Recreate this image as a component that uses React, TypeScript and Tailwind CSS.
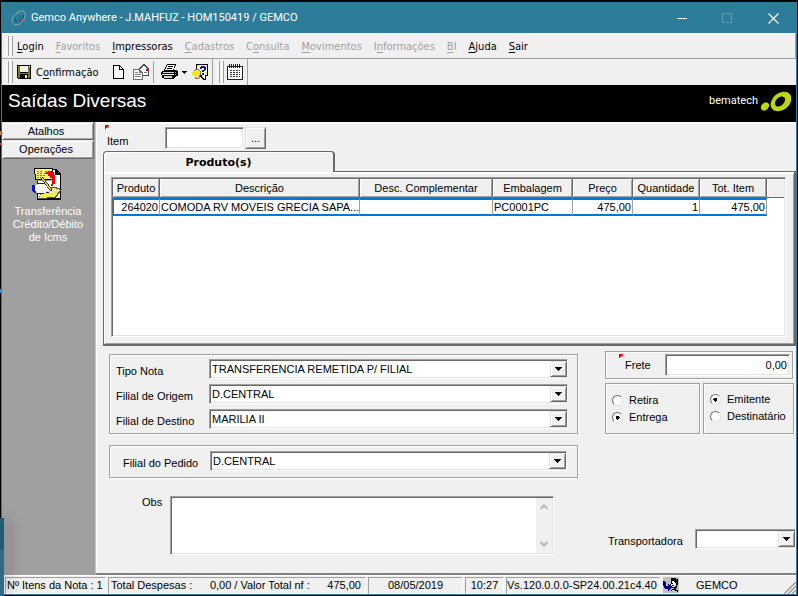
import { useState } from 'react';
import type { ReactNode } from 'react';

const sunken =
    'border border-t-[#a0a0a0] border-l-[#a0a0a0] border-r-white border-b-white shadow-[inset_1px_1px_0_#696969,inset_-1px_-1px_0_#e3e3e3]';
const raised =
    'border border-t-[#e3e3e3] border-l-[#e3e3e3] border-r-[#696969] border-b-[#696969] shadow-[inset_1px_1px_0_#fff,inset_-1px_-1px_0_#a0a0a0]';
const group = 'border border-[#a0a0a0] shadow-[inset_1px_1px_0_#fff,1px_1px_0_#fff]';
const statusPanel =
    'h-[17px] flex items-center whitespace-nowrap border border-t-[#a0a0a0] border-l-[#a0a0a0] border-r-white border-b-white';

const menus = [
    { before: '', key: 'L', after: 'ogin', enabled: true },
    { before: '', key: 'F', after: 'avoritos', enabled: false },
    { before: '', key: 'I', after: 'mpressoras', enabled: true },
    { before: '', key: 'C', after: 'adastros', enabled: false },
    { before: 'C', key: 'o', after: 'nsulta', enabled: false },
    { before: '', key: 'M', after: 'ovimentos', enabled: false },
    { before: 'I', key: 'n', after: 'formações', enabled: false },
    { before: '', key: 'B', after: 'I', enabled: false },
    { before: '', key: 'A', after: 'juda', enabled: true },
    { before: '', key: 'S', after: 'air', enabled: true },
];

const columns = ['Produto', 'Descrição', 'Desc. Complementar', 'Embalagem', 'Preço', 'Quantidade', 'Tot. Item'];

const Icon = ({ w, h, children }: { w: number; h: number; children: ReactNode }) => (
    <svg width={w} height={h} viewBox={`0 0 ${w} ${h}`} shapeRendering="crispEdges" className="shrink-0" aria-hidden="true">
        {children}
    </svg>
);

const AppIcon = () => (
    <svg width="16" height="16" viewBox="0 0 16 16" fill="none" className="shrink-0" aria-hidden="true">
        <path d="M6 2.500L10 .7L13.500 1.500L14.500 5L13 10L9 14L4 15L1 12.500L1.500 8L4 4.500L8 2.500" stroke="#b5aeb0" strokeDasharray="2 1" />
        <path d="M3 9.500h2M4 11.500h2M8 10.500h2" stroke="#5a1c78" />
        <path d="M10.500 6v3M12.500 5v3" stroke="#7b1c78" />
        <path d="M6 8.500h1M11 10.500h1" stroke="#c5354b" />
    </svg>
);

const SaveIcon = () => (
    <Icon w={14} h={14}>
        <path d="M0 0h14v14H1L0 13z" fill="#000" />
        <path d="M1 1h2v7h8V1h2v12h-2V9H3v4H1z" fill="#808000" />
        <path d="M3 1h8v6H3z" fill="#f0f0f0" />
        <path d="M8 10h2v3H8zM12 1h1v1h-1z" fill="#f0f0f0" />
    </Icon>
);

const PageIcon = () => (
    <Icon w={11} h={14}>
        <path d="M0 0h7v1h1v1h1v1h1v1h1v10H0z" fill="#000" />
        <path d="M1 1h5v4h4v8H1zM7 2h1v1h1v1H7z" fill="#fff" />
    </Icon>
);

const MailIcon = () => (
    <Icon w={16} h={16}>
        <path d="M5 5h1V4h1V3h1V2h1V1h1V0h2v1h1v1h1v1h1v1h1v8H5z" fill="#444" />
        <path d="M8 4h1V3h1V2h2v1h1v1h1v1H8zM6 5h9v6H6z" fill="#fff" />
        <path d="M13 5h2v2h-2z" fill="#e00020" />
        <path d="M11 8h3v1h-3z" fill="#777" />
        <path d="M0 5h7v1h1v1h1v1h1v8H0z" fill="#707070" />
        <path d="M1 6h5v3h3v6H1z" fill="#fff" />
        <path d="M2 8h3v1H2zM2 10h6v1H2zM2 12h6v1H2z" fill="#808080" />
    </Icon>
);

const PrinterIcon = () => (
    <Icon w={17} h={16}>
        <path d="M6 0h9v2h-1v2h-1v2h3v1h1v5h-2v1h-1v1h-1v1H3v-1H1v-3H0V8h1V7h2V5h1V3h1V1h1z" fill="#000" />
        <path d="M6 1h8v1h-1v3h-1v1H4V5h1V3h1z" fill="#fff" />
        <path d="M7 2h5v1H7zM6 4h5v1H6z" fill="#000" />
        <path d="M2 8h11v1H2zM3 12h8v2H3z" fill="#d6d6d6" />
        <path d="M1 10h12v1H1z" fill="#fff" />
        <path d="M8 12h3v1H8z" fill="#e6e600" />
        <path d="M14 8h1v1h-1zM14 10h1v1h-1z" fill="#999" />
    </Icon>
);

const HelpPrintIcon = () => (
    <Icon w={17} h={17}>
        <path d="M4 0h12v12h-2v4h-3v-1h-1v-1H9v-1H4z" fill="#000" />
        <path d="M5 1h10v10H5z" fill="#fff" />
        <path d="M12 11h1v4h-1v-1h-1v-1h-1v-2z" fill="#fff" />
        <path d="M5 1h2v2H5zM13 1h2v2h-2zM13 8h2v3h-2z" fill="#f0e070" />
        <path d="M1 7h2V6h4v1h1v4H7v3H4v-2H1v-1H0V8h1z" fill="#f4e526" />
        <path d="M2 6h1V5h4v1h1v1H7V6H3v1H2zM8 7h1v4H8zM7 11h1v3H7zM3 13h1v1h3v1H3z" fill="#777" />
        <path d="M8 3h1V2h4v1h1v3h-1v1h-1v1h-2V6h2V4h-2v1H8zM10 9h2v2h-2z" fill="#0f159a" />
    </Icon>
);

const NotesIcon = () => (
    <Icon w={16} h={16}>
        <path d="M0 2h16v14H0z" fill="#222" />
        <path d="M1 3h14v12H1z" fill="#fff" />
        <path d="M2 0h1v4H2zM4 0h1v4H4zM6 0h1v4H6zM8 0h1v4H8zM10 0h1v4h-1zM12 0h1v4h-1z" fill="#222" />
        <path d="M3 6.500h10M3 8.500h10M3 10.500h10M3 12.500h10" stroke="#333" strokeDasharray="2 1" />
    </Icon>
);

const TransferIcon = () => (
    <Icon w={32} h={32}>
        <path d="M19 1h5l5 5v26H5V13h14z" fill="#000" />
        <path d="M19 2h4v5h5v23H6V13h13z" fill="#fff" />
        <path d="M2 0h19v12H3z" fill="#000" />
        <path d="M3 1h17v10H4z" fill="#fff27a" />
        <path d="M5 3.500h6M13 3.500h5M5 5.500h5M12 5.500h6M5 7.500h9M5 9.500h7" stroke="#8d8900" strokeDasharray="2 1" />
        <path d="M16 3h4v1h2v3h1v9h-2v2h-2v-2h1v-6h-2V8h-2V6h-2V4h1z" fill="#f00000" />
        <path d="M11 20l12-1 7 2-6 9-18 1z" fill="#555" />
        <path d="M12 21l11-1 5 2-5 7-16 1z" fill="#f5e84a" />
        <path d="M13 24.500h9M11 27.500h11M19 22.500h7" stroke="#fff" strokeDasharray="2 1" />
        <path d="M-1 17h5v8H2l-3-3z" fill="#0018c8" />
        <path d="M3 17h2v-1h8l4 4v3h-3v2H4v-2H3z" fill="#fff" />
        <path d="M5 15.500h8M14 24.500h3M4 25.500h8" stroke="#222" />
        <path d="M8 9h3l9 12v2h-2l-8-11z" fill="#333" />
        <path d="M9 9h1l9 12-1 1-8-11z" fill="#ead72e" />
    </Icon>
);

const UserIcon = () => (
    <Icon w={16} h={16}>
        <path d="M0 0h16v16H0z" fill="#c0c0c0" />
        <path d="M8 1h5v1h2v6h-1v3h-1v2h2v2h-1v-1h-2v-1H9v1H8v-1h1v-1h2v-1H8V9H7V7h1z" fill="#000" />
        <path d="M9 4h2v1h1v1h1v3h-1v1H9V9H8V7h1z" fill="#f0f0f0" />
        <path d="M9 6h1v1H9zM9 8h2v1H9z" fill="#000" />
        <path d="M0 4h2v1h1v4h2V7h1v1h1v1h1v1h1v1H8v1H7v1H6v1H5v-2H2v-1H1V9H0z" fill="#00007c" />
    </Icon>
);

const Bematech = () => (
    <div className="flex items-center gap-[3px] text-white">
        <span className="font-[Roboto,sans-serif] text-[11px] leading-4">bematech</span>
        <svg width="30" height="22" viewBox="0 0 30 22" aria-hidden="true">
            <ellipse cx="4" cy="16.500" rx="4.500" ry="3.500" transform="rotate(-45 4 16.500)" fill="#bdd70f" />
            <ellipse cx="20" cy="11.500" rx="11.500" ry="8.500" transform="rotate(-40 20 11.500)" fill="#bdd70f" />
            <ellipse cx="19" cy="11.500" rx="6" ry="4" transform="rotate(-45 19 11.500)" fill="#000" />
        </svg>
    </div>
);

const Grip = () => (
    <span className="flex gap-px self-stretch py-[2px]">
        <span className="w-[3px] border-l border-l-white border-r border-r-[#a0a0a0]" />
        <span className="w-[3px] border-l border-l-white border-r border-r-[#a0a0a0]" />
    </span>
);

const Marker = () => (
    <svg width="4" height="4" viewBox="0 0 4 4" shapeRendering="crispEdges" className="absolute -top-1 -left-[3px]" aria-hidden="true">
        <path d="M0 0h4v1H3v1H2v1H1v1H0z" fill="#f00000" />
        <path d="M3 1h1v2H2V2h1z" fill="#c89090" />
    </svg>
);

const Combo = ({ id, value }: { id: string; value: string }) => (
    <div className={`relative min-w-0 flex-1 bg-white h-[20px] ${sunken}`}>
        <select id={id} className="block w-full h-full appearance-none bg-transparent pl-[2px] pr-5 leading-4 outline-none">
            <option>{value}</option>
        </select>
        <span className={`pointer-events-none absolute top-px right-0 bottom-px w-[17px] flex items-center justify-center bg-[#f0f0f0] ${raised}`}>
            <Icon w={7} h={4}>
                <path d="M0 0h7v1H6v1H5v1H4v1H3V3H2V2H1V1H0z" fill="#000" />
            </Icon>
        </span>
    </div>
);

const Radio = ({ name, label, checked, onChange }: { name: string; label: string; checked: boolean; onChange: () => void }) => (
    <label className="flex items-center gap-[6px] h-[17px]">
        <input
            type="radio"
            name={name}
            checked={checked}
            onChange={onChange}
            className="appearance-none w-[11px] h-[11px] rounded-full bg-white border border-t-[#696969] border-l-[#696969] border-r-[#e3e3e3] border-b-[#e3e3e3] checked:bg-[radial-gradient(circle,#000_2px,#fff_2px)]"
        />
        {label}
    </label>
);

const App = () => {
    const [entrega, setEntrega] = useState('Entrega');
    const [pagador, setPagador] = useState('Emitente');

    return (
        <div className="relative min-h-screen flex flex-col bg-black pt-[2px] pb-px px-px font-['Liberation_Sans',Arial,sans-serif] text-[11px] leading-[13px] text-black">
            <div className="flex-1 flex flex-col bg-[#f0f0f0] border border-[#2d7d9a]">
                {/* Title bar */}
                <div className="h-[30px] pl-[9px] flex items-center bg-[#2d7d9a] text-white">
                    <AppIcon />
                    <span className="ml-1 flex-1 font-[Roboto,sans-serif] text-[11px] leading-4">Gemco Anywhere - J.MAHFUZ - HOM150419 / GEMCO</span>
                    <button aria-label="Minimizar" className="w-[45px] h-full flex items-center justify-center">
                        <Icon w={10} h={1}><path d="M0 0h10v1H0z" fill="#fff" /></Icon>
                    </button>
                    <button aria-label="Maximizar" disabled className="w-[46px] h-full flex items-center justify-center">
                        <span className="w-[10px] h-[10px] border border-[#5b9bb3]" />
                    </button>
                    <button aria-label="Fechar" className="w-[46px] h-full flex items-center justify-center">
                        <svg width="11" height="11" viewBox="0 0 11 11" stroke="#fff" strokeWidth="1.200"><path d="M.5 .5l10 10M10.500 .5l-10 10" /></svg>
                    </button>
                </div>

                {/* Menu bar */}
                <nav className="h-[26px] pl-1 flex items-center gap-1 border-t border-t-white border-b border-b-[#a0a0a0] border-r border-r-[#a0a0a0] font-['DejaVu_Sans_Condensed','DejaVu_Sans',sans-serif]">
                    <Grip />
                    <div className="flex gap-[12px]">
                        {menus.map((m) => (
                            <button key={m.key + m.after} disabled={!m.enabled} className="disabled:text-[#a0a0a0]">
                                {m.before}<span className="underline underline-offset-2">{m.key}</span>{m.after}
                            </button>
                        ))}
                    </div>
                </nav>

                {/* Toolbar */}
                <div className="h-[26px] pl-1 flex items-center">
                    <Grip />
                    <button className="ml-1 flex items-center gap-[5px] font-['DejaVu_Sans_Condensed','DejaVu_Sans',sans-serif]">
                        <SaveIcon />
                        <span>C<span className="underline underline-offset-2">o</span>nfirmação</span>
                    </button>
                    <button aria-label="Novo" className="ml-[14px]"><PageIcon /></button>
                    <button aria-label="Enviar" className="ml-[9px]"><MailIcon /></button>
                    <span className="ml-[4px] w-px h-[22px] bg-[#a0a0a0]" />
                    <button aria-label="Imprimir" className="ml-[7px] flex items-center gap-1">
                        <PrinterIcon />
                        <Icon w={5} h={3}><path d="M0 0h5v1H4v1H3v1H2V2H1V1H0z" fill="#000" /></Icon>
                    </button>
                    <button aria-label="Ajuda de impressão" className="ml-[5px]"><HelpPrintIcon /></button>
                    <span className="ml-[3px] w-px h-full bg-[#a0a0a0]" />
                    <span className="ml-[4px] self-stretch flex"><Grip /></span>
                    <button aria-label="Agenda" className="ml-[3px]"><NotesIcon /></button>
                    <span className="ml-[4px] w-px h-full bg-[#a0a0a0]" />
                </div>

                <header className="h-[37px] pl-[6px] pr-[5px] pb-[5px] flex items-center justify-between bg-black">
                    <h1 className="text-[19px] leading-6 text-white">Saídas Diversas</h1>
                    <Bematech />
                </header>

                <div className="flex-1 flex">
                    {/* Side bar */}
                    <aside className="w-[93px] pr-px shrink-0 flex flex-col bg-[#a0a0a0]">
                        <button className={`h-[18px] pr-1 bg-[#f0f0f0] ${raised}`}>Atalhos</button>
                        <button className={`h-[19px] pr-1 bg-[#f0f0f0] ${raised}`}>Operações</button>
                        <button className="mt-[9px] flex flex-col items-center text-white">
                            <TransferIcon />
                            <span className="mt-[5px]">Transferência<br />Crédito/Débito<br />de Icms</span>
                        </button>
                    </aside>

                    <main className="flex-1 min-w-0 flex flex-col border-l border-l-[#c5d86d] border-b-2 border-b-[#808080]">
                        <div className="flex-1 flex flex-col border-t-2 border-l border-white">
                            {/* Item search */}
                            <div className="h-[27px] pl-[10px] pt-[3px] flex">
                                <label htmlFor="item" className="relative w-[58px] pt-2"><span className="absolute top-[2px] left-px"><Marker /></span>Item</label>
                                <input id="item" className={`w-[79px] h-[22px] bg-white px-1 outline-none ${sunken}`} />
                                <button aria-label="Procurar item" className={`ml-px w-[21px] h-[22px] bg-[#f0f0f0] ${raised}`}>...</button>
                            </div>

                            {/* Products tab */}
                            <div className="ml-[6px]">
                                <button className="relative z-10 block w-[232px] h-[21px] rounded-t-[4px] bg-[#f0f0f0] border-t border-l border-r-2 border-[#696969] shadow-[inset_1px_1px_0_#fff] font-['DejaVu_Sans',sans-serif] font-bold">
                                    Produto(s)
                                </button>
                                <div className="-mt-px border-t border-l border-r-2 border-b-2 border-[#696969] shadow-[inset_1px_2px_0_#fff,inset_-1px_-1px_0_#a0a0a0] pt-[5px] pl-[7px] pr-[8px] pb-[7px]">
                                    <div className={`h-[160px] bg-white p-px ${sunken}`}>
                                        <table className="w-full table-fixed border-separate border-spacing-0">
                                            <colgroup>
                                                <col className="w-[47px]" />
                                                <col className="w-[200px]" />
                                                <col className="w-[133px]" />
                                                <col className="w-[80px]" />
                                                <col className="w-[60px]" />
                                                <col className="w-[67px]" />
                                                <col className="w-[67px]" />
                                                <col />
                                            </colgroup>
                                            <thead>
                                                <tr className="h-[19px]">
                                                    {columns.map((c) => (
                                                        <th key={c} className="p-0 font-normal whitespace-nowrap bg-[#f0f0f0] border-r border-b border-[#696969] shadow-[inset_1px_1px_0_#fff,inset_-1px_-1px_0_#a0a0a0]">{c}</th>
                                                    ))}
                                                    <td className="bg-[#f0f0f0] border-b border-[#696969] shadow-[inset_1px_1px_0_#fff]" />
                                                </tr>
                                            </thead>
                                            <tbody>
                                                <tr className="h-[18px] [&>td]:border-y-2 [&>td]:border-y-[#0078d7] [&>td]:border-r [&>td]:border-r-[#a0a0a0] [&>td]:px-px [&>td]:py-0 [&>td]:whitespace-nowrap">
                                                    <td className="text-right border-l border-l-[#0078d7]">264020</td>
                                                    <td>COMODA RV MOVEIS GRECIA SAPA...</td>
                                                    <td />
                                                    <td>PC0001PC</td>
                                                    <td className="text-right">475,00</td>
                                                    <td className="text-right">1</td>
                                                    <td className="text-right">475,00</td>
                                                </tr>
                                            </tbody>
                                        </table>
                                    </div>
                                </div>
                            </div>

                            <div className="flex-1 flex">
                                {/* Branches and notes */}
                                <div className="flex-1 min-w-0 pl-[12px] pt-[8px]">
                                    <div className={`pl-[6px] pr-[9px] py-[4px] flex flex-col gap-[5px] ${group}`}>
                                        <div className="flex items-center">
                                            <label htmlFor="tipo" className="w-[93px] pt-1">Tipo Nota</label>
                                            <Combo id="tipo" value="TRANSFERENCIA REMETIDA P/ FILIAL" />
                                        </div>
                                        <div className="flex items-center">
                                            <label htmlFor="origem" className="w-[93px] pt-1">Filial de Origem</label>
                                            <Combo id="origem" value="D.CENTRAL" />
                                        </div>
                                        <div className="flex items-center">
                                            <label htmlFor="destino" className="w-[93px] pt-1">Filial de Destino</label>
                                            <Combo id="destino" value="MARILIA II" />
                                        </div>
                                    </div>
                                    <div className={`mt-[11px] pl-[13px] pr-[10px] pt-[5px] pb-[6px] flex items-center ${group}`}>
                                        <label htmlFor="pedido" className="w-[87px] pt-1">Filial do Pedido</label>
                                        <Combo id="pedido" value="D.CENTRAL" />
                                    </div>
                                    <div className="mt-[18px] pl-[33px] pr-[24px] flex">
                                        <label htmlFor="obs" className="w-[28px]">Obs</label>
                                        <div className={`flex-1 h-[59px] p-px flex bg-white ${sunken}`}>
                                            <textarea id="obs" className="flex-1 min-w-0 resize-none overflow-hidden px-1 outline-none" />
                                            <div className="w-[16px] py-[6px] flex flex-col items-center justify-between bg-[#f0f0f0]">
                                                <svg width="8" height="6" viewBox="0 0 8 6" fill="none" stroke="#b8b8b8" strokeWidth="2" aria-hidden="true"><path d="M.5 5L4 1.500L7.500 5" /></svg>
                                                <svg width="8" height="6" viewBox="0 0 8 6" fill="none" stroke="#b8b8b8" strokeWidth="2" aria-hidden="true"><path d="M.5 1L4 4.500L7.500 1" /></svg>
                                            </div>
                                        </div>
                                    </div>
                                </div>

                                {/* Freight */}
                                <div className="ml-[27px] w-[191px] flex flex-col pt-[5px] pb-[24px]">
                                    <div className={`mr-[3px] h-[28px] pl-[19px] pr-[2px] flex items-center ${group}`}>
                                        <label htmlFor="frete" className="relative w-[40px]"><span className="absolute -top-px -left-[3px]"><Marker /></span>Frete</label>
                                        <input id="frete" defaultValue="0,00" className={`flex-1 min-w-0 h-[22px] bg-white px-[2px] text-right outline-none ${sunken}`} />
                                    </div>
                                    <div className="mt-[4px] mr-[2px] h-[51px] flex gap-[3px]">
                                        <div className={`w-[95px] pl-[6px] pt-[8px] ${group}`}>
                                            <Radio name="entrega" label="Retira" checked={entrega === 'Retira'} onChange={() => setEntrega('Retira')} />
                                            <Radio name="entrega" label="Entrega" checked={entrega === 'Entrega'} onChange={() => setEntrega('Entrega')} />
                                        </div>
                                        <div className={`flex-1 pl-[6px] pt-[7px] whitespace-nowrap ${group}`}>
                                            <Radio name="pagador" label="Emitente" checked={pagador === 'Emitente'} onChange={() => setPagador('Emitente')} />
                                            <Radio name="pagador" label="Destinatário" checked={pagador === 'Destinatário'} onChange={() => setPagador('Destinatário')} />
                                        </div>
                                    </div>
                                    <div className="mt-auto pl-[3px] flex items-center">
                                        <label htmlFor="transportadora" className="w-[87px] pt-1">Transportadora</label>
                                        <Combo id="transportadora" value="" />
                                    </div>
                                </div>
                            </div>
                        </div>
                    </main>
                </div>

                {/* Status bar */}
                <footer className="h-[19px] pl-[3px] flex items-center gap-[2px] border-t border-t-white">
                    <span className={`w-[101px] pl-px ${statusPanel}`}>Nº Itens da Nota : 1</span>
                    <span className={`flex-1 pl-[2px] pr-[4px] justify-between ${statusPanel}`}>
                        <span>Total Despesas :</span>
                        <span>0,00 / Valor Total nf :</span>
                        <span>475,00</span>
                    </span>
                    <span className={`w-[95px] justify-center ${statusPanel}`}>08/05/2019</span>
                    <span className={`w-[39px] justify-center ${statusPanel}`}>10:27</span>
                    <span className={`w-[154px] ${statusPanel}`}>Vs.120.0.0.0-SP24.00.21c4.40</span>
                    <span className="ml-px w-[31px]"><UserIcon /></span>
                    <span className="w-[86px]">GEMCO</span>
                    <svg width="12" height="12" viewBox="0 0 12 12" stroke="#a0a0a0" strokeWidth="1.500" className="self-end" aria-hidden="true">
                        <path d="M0 12L12 0M4 12L12 4M8 12L12 8" />
                    </svg>
                </footer>
            </div>

            {/* Edge of the window lying in front, and what shows of the desktop */}
            <div className="absolute left-0 bottom-0 w-[4px] h-[78px] bg-[#2f6b82] border-t-[32px] border-t-[#1f5b72] shadow-[4px_0_14px_rgba(0,0,0,0.35)]" />
            <span className="absolute left-0 top-[131px] w-px h-[4px] bg-[#d9824a]" />
            <span className="absolute left-0 top-[143px] w-px h-[2px] bg-[#c05a28]" />
            <span className="absolute left-0 top-[289px] w-px h-[4px] bg-[#3a8fd0]" />
        </div>
    );
};

export default App;
